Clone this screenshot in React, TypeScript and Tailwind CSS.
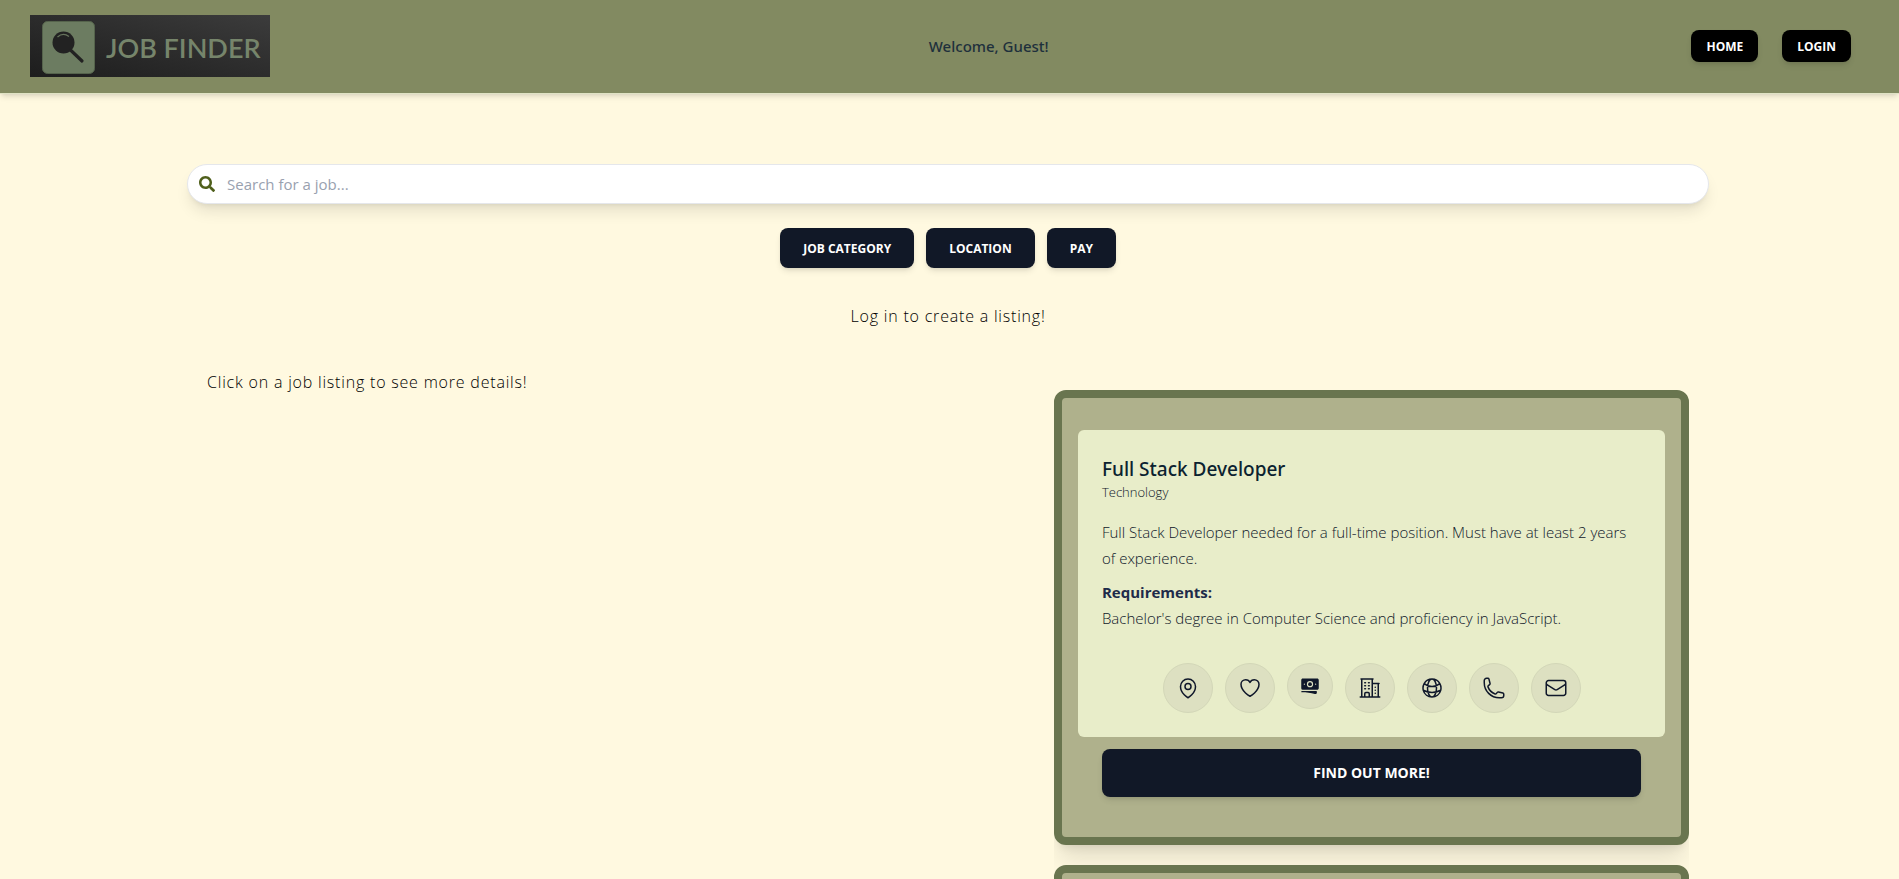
import React, { ReactNode } from "react";
import { FaSearch } from "react-icons/fa";
import {
  HiBanknotes,
  HiOutlineBuildingOffice2,
  HiOutlineEnvelope,
  HiOutlineGlobeAlt,
  HiOutlineHeart,
  HiOutlineMapPin,
  HiOutlinePhone,
} from "react-icons/hi2";

function Logo() {
  return (
    <a
      href="#home"
      aria-label="Job Finder"
      className="mr-4 flex h-[62px] w-60 items-center gap-[11px] bg-linear-to-tr from-[#1d1d1d] to-[#3c3c3c] pt-[3px] pl-3"
    >
      <svg viewBox="0 0 53 53" className="size-[53px] shrink-0" aria-hidden="true">
        <rect x="0.5" y="0.5" width="52" height="52" rx="5" fill="#6c7c61" stroke="#55634c" />
        <circle cx="21.500" cy="21.500" r="11" fill="#222" />
        <path d="M29 29.500 40 40" stroke="#222" strokeWidth="3.200" strokeLinecap="round" />
        <path d="M15.500 16q5.500-5 11.500-0.500" fill="none" stroke="#66745c" strokeWidth="1.300" />
      </svg>
      <span className="font-['Lato',sans-serif] text-[27px] leading-8 font-semibold whitespace-nowrap text-[#76856b]">
        JOB FINDER
      </span>
    </a>
  );
}

const details: { label: string; icon: ReactNode; small?: boolean }[] = [
  { label: "Location", icon: <HiOutlineMapPin className="size-6" /> },
  { label: "Save", icon: <HiOutlineHeart className="size-6" /> },
  { label: "Pay", icon: <HiBanknotes className="size-5" />, small: true },
  { label: "Company", icon: <HiOutlineBuildingOffice2 className="size-6" /> },
  { label: "Website", icon: <HiOutlineGlobeAlt className="size-6" /> },
  { label: "Phone", icon: <HiOutlinePhone className="size-6" /> },
  { label: "Email", icon: <HiOutlineEnvelope className="size-6" /> },
];

function NavButton({ children }: { children: ReactNode }) {
  return (
    <button className="h-8 rounded-lg bg-black px-[15px] pt-px text-xs font-bold text-white shadow-md">
      {children}
    </button>
  );
}

function FilterButton({ children }: { children: ReactNode }) {
  return (
    <button className="h-10 rounded-lg bg-[#111827] px-[23px] pt-px text-xs font-bold text-white shadow-md">
      {children}
    </button>
  );
}

function JobCard() {
  return (
    <article className="rounded-xl border-8 border-[#69754f] bg-[#afb18c] px-4 pt-8 pb-10 shadow-xl">
      <div className="rounded-md bg-[#e8edc9] p-6">
        <h2 className="font-['Noto_Sans',sans-serif] text-[19px] leading-[30px] font-medium text-[#0b2230]">
          Full Stack Developer
        </h2>
        <p className="text-[13px] leading-4 font-light text-[#0f172a]">Technology</p>
        <p className="mt-[19px] text-[15px] leading-[26px] font-light text-[#0f172a]">
          Full Stack Developer needed for a full-time position. Must have at least 2 years of
          experience.
        </p>
        <h3 className="mt-2 text-[15px] leading-[26px] font-bold text-[#1e2b4a]">Requirements:</h3>
        <p className="text-[15px] leading-[26px] font-light text-[#0f172a]">
          Bachelor's degree in Computer Science and proficiency in JavaScript.
        </p>
        <div className="mt-8 flex items-start justify-center gap-3">
          {details.map(({ label, icon, small }) => (
            <button
              key={label}
              aria-label={label}
              className={
                small
                  ? "flex size-[46px] items-center justify-center rounded-full border border-[#d3d7b8] bg-[#dde0c1] text-[#0f172a]"
                  : "flex size-[50px] items-center justify-center rounded-full border border-[#d3d7b8] bg-[#dde0c1] text-[#0f172a]"
              }
            >
              {icon}
            </button>
          ))}
        </div>
      </div>
      <div className="px-6 pt-3">
        <button className="h-12 w-full rounded-lg bg-[#111827] text-sm font-bold text-white shadow-md">
          FIND OUT MORE!
        </button>
      </div>
    </article>
  );
}

export default function App() {
  return (
    <div className="min-h-screen bg-[#fff9e0] font-['Open_Sans',sans-serif] text-[#111827]">
      <header className="flex items-center justify-between border-b border-[#dfe2c4] bg-[#828a61] pt-[15px] pr-12 pb-4 pl-[30px] shadow-md">
        <Logo />
        <p className="font-['Noto_Sans',sans-serif] text-[15px] leading-6 font-medium text-[#1e303c]">
          Welcome, Guest!
        </p>
        <nav className="flex gap-6">
          <NavButton>HOME</NavButton>
          <NavButton>LOGIN</NavButton>
        </nav>
      </header>

      <main className="mr-[10%] ml-[9.85%] pt-[70px]">
        <div className="flex h-10 items-center gap-3 rounded-full border border-gray-200 bg-white px-[11px] shadow-lg">
          <FaSearch className="size-4 text-[#4f5f1b]" />
          <input
            type="text"
            aria-label="Search for a job"
            placeholder="Search for a job..."
            className="min-w-0 flex-1 bg-transparent pt-px text-[15px] outline-none placeholder:text-gray-400"
          />
        </div>
        <div className="mt-6 flex justify-center gap-3">
          <FilterButton>JOB CATEGORY</FilterButton>
          <FilterButton>LOCATION</FilterButton>
          <FilterButton>PAY</FilterButton>
        </div>
        <p className="mt-9 text-center text-base leading-6 font-light tracking-wider text-black">
          Log in to create a listing!
        </p>
        <div className="mt-[42px] flex justify-between px-5">
          <p className="text-base leading-6 font-light tracking-wider text-black">
            Click on a job listing to see more details!
          </p>
          <section className="mt-5 flex w-3/7 flex-col gap-5 overflow-x-hidden">
            <JobCard />
            <JobCard />
          </section>
        </div>
      </main>
    </div>
  );
}
